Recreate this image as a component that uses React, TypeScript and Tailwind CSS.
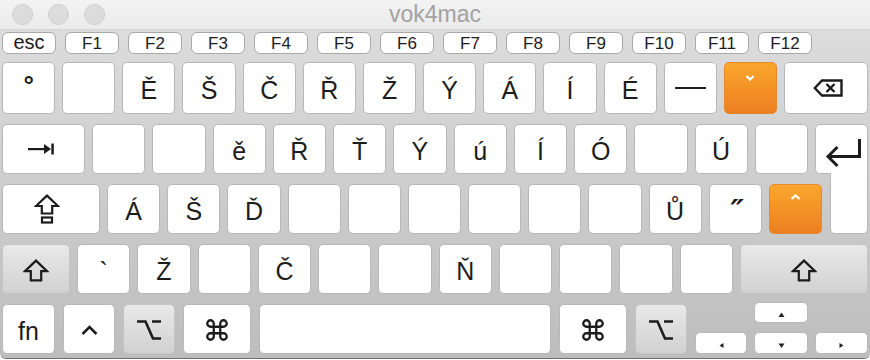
import type { ReactNode } from "react";

type Tone = "white" | "gray" | "orange";

const toneClass: Record<Tone, string> = {
  white: "bg-white border-[#b8b8b8]",
  gray: "bg-linear-to-b from-[#e9e9e9] to-[#d1d1d1] border-[#c4c4c4]",
  orange: "bg-linear-to-b from-[#fba62c] to-[#ec7f22] border-[#e48a2c]",
};

function Key({
  children,
  tone = "white",
  className = "flex-1",
}: {
  children?: ReactNode;
  tone?: Tone;
  className?: string;
}) {
  return (
    <div
      className={`flex min-w-0 items-center justify-center rounded-[5px] border text-[25px] leading-none text-[#1c1c1c] ${toneClass[tone]} ${className}`}
    >
      {children}
    </div>
  );
}

function Letter({ c }: { c: string }) {
  if (c === "˝")
    return (
      <span className="translate-x-[2px] translate-y-[2px] font-['DejaVu_Sans',sans-serif] text-[30px] font-bold italic">
        ″
      </span>
    );
  if (c === "°") return <span className="-translate-y-[3px] text-[26px] font-bold">°</span>;
  return <span className="translate-y-[2px]">{c}</span>;
}

const fKeys = ["esc", "F1", "F2", "F3", "F4", "F5", "F6", "F7", "F8", "F9", "F10", "F11", "F12"];
const row1 = ["°", "", "Ě", "Š", "Č", "Ř", "Ž", "Ý", "Á", "Í", "É"];
const row2 = ["", "", "ě", "Ř", "Ť", "Ý", "ú", "Í", "Ó", "", "Ú", ""];
const row3 = ["Á", "Š", "Ď", "", "", "", "", "", "", "Ů", "˝"];
const row4 = ["`", "Ž", "", "Č", "", "", "Ň", "", "", "", ""];

function ShiftIcon() {
  return (
    <svg width="26" height="23" viewBox="0 0 26 23" fill="none" stroke="#1c1c1c" strokeWidth="2.2">
      <path d="M13 1.6 L24 12.2 H18.2 V21.4 H7.8 V12.2 H2 Z" strokeLinejoin="miter" />
    </svg>
  );
}

function OptionIcon() {
  return (
    <svg width="26" height="22" viewBox="0 0 26 22" fill="none" stroke="#1c1c1c" strokeWidth="2.6">
      <path d="M1 2.5 H9.5 L17 19.5 H25 M16 2.5 H25" />
    </svg>
  );
}

function CommandIcon() {
  return (
    <svg width="26" height="26" viewBox="0 0 24 24" fill="none" stroke="#1c1c1c" strokeWidth="2.1">
      <path d="M15 6v12a3 3 0 1 0 3-3H6a3 3 0 1 0 3 3V6a3 3 0 1 0-3 3h12a3 3 0 1 0-3-3" />
    </svg>
  );
}

function Tri({ d }: { d: string }) {
  return (
    <svg width="7" height="6" viewBox="0 0 7 6" fill="#222">
      <path d={d} />
    </svg>
  );
}

export default function App() {
  return (
    <div className="h-[360px] w-[870px] bg-white font-['Liberation_Sans',Arial,sans-serif]">
      <div className="h-[359px] overflow-hidden rounded-b-[6px] border-b border-[#6e6e6e]">
        {/* title bar */}
        <div className="grid h-[30px] grid-cols-[1fr_auto_1fr] items-center border-b border-[#d6d6d6] bg-linear-to-b from-[#f3f3f3] to-[#ebebeb]">
          <div className="flex gap-[15px] pl-[12px]">
            <div className="h-[21px] w-[21px] rounded-full border border-[#cfcfcf] bg-[#dcdcdc]" />
            <div className="h-[21px] w-[21px] rounded-full border border-[#cfcfcf] bg-[#dcdcdc]" />
            <div className="h-[21px] w-[21px] rounded-full border border-[#cfcfcf] bg-[#dcdcdc]" />
          </div>
          <div className="text-[23px] leading-none text-[#a2a2a2]">vok4mac</div>
          <div />
        </div>

        {/* keyboard */}
        <div className="flex h-[328px] flex-col bg-linear-to-b from-[#dcdcdc] to-[#bdbdbd] px-[2px] pt-[2px]">
          <div className="flex h-[22px] gap-[9px]">
            {fKeys.map((k) => (
              <div
                key={k}
                className={`flex w-[54px] items-center justify-center rounded-[6px] border border-[#a9a9a9] bg-white leading-none text-[#1c1c1c] ${k === "esc" ? "text-[20px]" : "text-[17px]"}`}
              >
                <span className={k === "esc" ? "-translate-y-[1px]" : ""}>{k}</span>
              </div>
            ))}
          </div>

          {/* row 1 */}
          <div className="mt-[8px] flex h-[52px] gap-[7px]">
            {row1.map((c, i) => (
              <Key key={i}>
                <Letter c={c} />
              </Key>
            ))}
            <Key>
              <span className="block h-[2.5px] w-[31px] bg-[#1c1c1c]" />
            </Key>
            <Key tone="orange" className="flex-1 items-start pt-[12px]">
              <svg width="10" height="6" viewBox="0 0 10 6" fill="none" stroke="white" strokeWidth="2.3">
                <path d="M1.5 1 L5 4.5 L8.5 1" />
              </svg>
            </Key>
            <Key className="w-[84px] pl-[4px]">
              <svg width="30" height="18" viewBox="0 0 30 18" fill="none" stroke="#1c1c1c" strokeWidth="2.4">
                <path d="M1.8 9 L9 1.5 H28.5 V16.5 H9 Z" />
                <path d="M13.5 5 L21.5 13 M21.5 5 L13.5 13" />
              </svg>
            </Key>
          </div>

          {/* row 2 */}
          <div className="mt-[10px] flex h-[50px] gap-[7px]">
            <Key className="w-[83px] pr-[6px]">
              <svg width="26" height="12" viewBox="0 0 26 12" fill="#1c1c1c">
                <rect x="0" y="5" width="18" height="2.2" />
                <path d="M16 1 L23 6 L16 11 Z" />
                <rect x="23.3" y="0.5" width="2.5" height="11" />
              </svg>
            </Key>
            {row2.map((c, i) => (
              <Key key={i}>
                <Letter c={c} />
              </Key>
            ))}
            <div className="flex w-[53px] items-start justify-center rounded-t-[5px] rounded-bl-[5px] border border-[#b8b8b8] bg-white pl-[5px] pt-[14px]">
              <svg width="38" height="30" viewBox="0 0 38 30" fill="none" stroke="#1c1c1c" strokeWidth="3">
                <path d="M34.5 0 V17.5 H3" />
                <path d="M12.5 8 L3 17.5 L12.5 27" />
              </svg>
            </div>
          </div>

          {/* row 3 */}
          <div className="mt-[10px] flex h-[50px] gap-[7px]">
            <Key className="w-[98px] pr-[8px]">
              <svg width="26" height="30" viewBox="0 0 26 30" fill="none" stroke="#1c1c1c" strokeWidth="2.2">
                <path d="M13 1.6 L24 12 H18.2 V19.5 H7.8 V12 H2 Z" />
                <rect x="8" y="23.5" width="10" height="5" />
              </svg>
            </Key>
            {row3.map((c, i) => (
              <Key key={i}>
                <Letter c={c} />
              </Key>
            ))}
            <Key tone="orange" className="flex-1 items-start pt-[9px]">
              <svg width="11" height="6" viewBox="0 0 11 6" fill="none" stroke="white" strokeWidth="2.3">
                <path d="M1.5 5 L5.5 1.5 L9.5 5" />
              </svg>
            </Key>
            <div className="relative z-10 -mt-[11px] ml-px h-[61px] w-[38px] rounded-b-[5px] border-x border-b border-[#b8b8b8] bg-white" />
          </div>

          {/* row 4 */}
          <div className="mt-[10px] flex h-[50px] gap-[7px]">
            <Key tone="gray" className="w-[68px] pt-[3px]">
              <ShiftIcon />
            </Key>
            {row4.map((c, i) => (
              <Key key={i}>
                <Letter c={c} />
              </Key>
            ))}
            <Key tone="gray" className="w-[128px] pt-[3px]">
              <ShiftIcon />
            </Key>
          </div>

          {/* row 5 */}
          <div className="mt-[10px] flex h-[50px] items-end gap-[8px]">
            <Key className="h-full w-[53px]">
              <span className="translate-y-[2px]">fn</span>
            </Key>
            <Key className="h-full w-[52px] pt-[2px]">
              <svg width="17" height="10" viewBox="0 0 17 10" fill="none" stroke="#1c1c1c" strokeWidth="2.5">
                <path d="M1.5 9 L8.5 2 L15.5 9" />
              </svg>
            </Key>
            <Key tone="gray" className="h-full w-[52px] pt-[2px]">
              <OptionIcon />
            </Key>
            <Key className="h-full w-[68px] pt-[2px]">
              <CommandIcon />
            </Key>
            <Key className="h-full flex-1" />
            <Key className="h-full w-[68px] pt-[2px]">
              <CommandIcon />
            </Key>
            <Key tone="gray" className="h-full w-[52px] pt-[2px]">
              <OptionIcon />
            </Key>
            <div className="grid h-[52px] w-[173px] shrink-0 grid-cols-[52px_54px_53px] grid-rows-[21px_22px] gap-x-[7px] gap-y-[9px]">
              <div />
              <Key className="items-end pb-[4px]">
                <Tri d="M3.5 0.5 L6.5 5 H0.5 Z" />
              </Key>
              <div />
              <Key className="items-end pb-[4px]">
                <Tri d="M1.5 2.5 L5.5 0 V5 Z" />
              </Key>
              <Key className="items-end pb-[4px]">
                <Tri d="M0.5 0.5 H6.5 L3.5 5 Z" />
              </Key>
              <Key className="items-end pb-[4px]">
                <Tri d="M5.5 2.5 L1.5 0 V5 Z" />
              </Key>
            </div>
          </div>
        </div>
      </div>
    </div>
  );
}
